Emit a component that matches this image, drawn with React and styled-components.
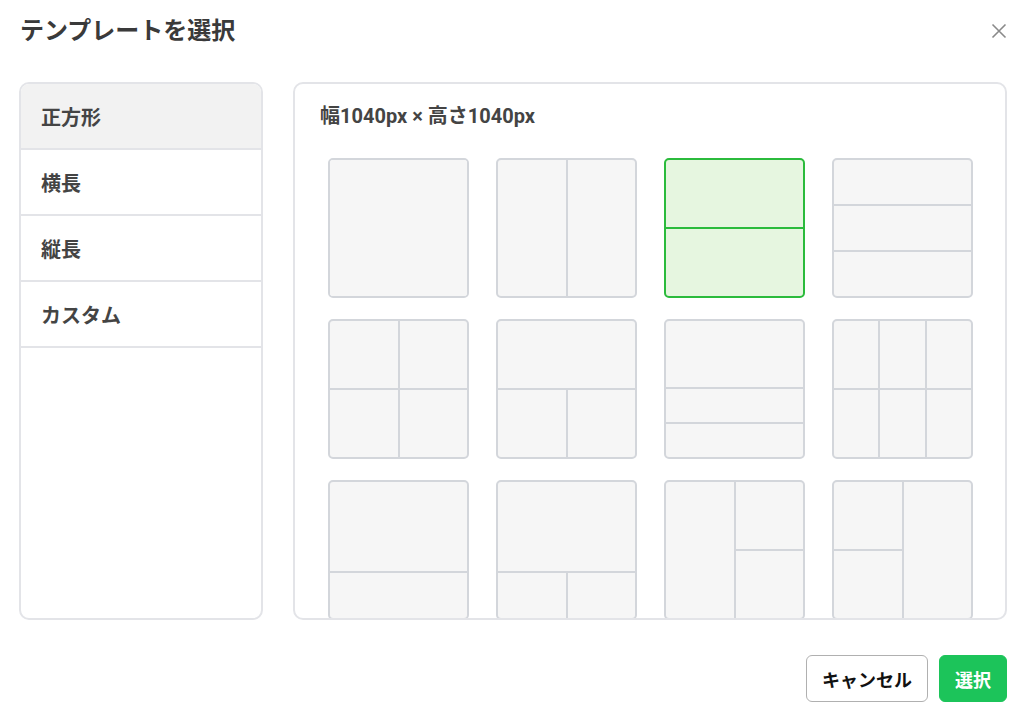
import React, { useState } from "react";
import styled, { createGlobalStyle } from "styled-components";

const GlobalStyle = createGlobalStyle`
  body {
    margin: 0;
    background: #fff;
    font-family: Roboto, "Noto Sans CJK JP", sans-serif;
  }
`;

const Modal = styled.div`
  width: 1024px;
  height: 715px;
  box-sizing: border-box;
  padding: 0 17px 0 19px;
  display: flex;
  flex-direction: column;
  background: #fff;
`;

const Header = styled.div`
  height: 82px;
  flex-shrink: 0;
  display: flex;
  justify-content: space-between;
  align-items: flex-start;
  padding-top: 14px;
  box-sizing: border-box;
`;

const Title = styled.h1`
  margin: 0 0 0 1px;
  font-size: 24px;
  line-height: 34px;
  font-weight: 700;
  color: #3a3a3a;
`;

const CloseButton = styled.button`
  border: none;
  background: none;
  padding: 0;
  margin: 5px -4px 0 0;
  width: 24px;
  height: 24px;
  display: flex;
  align-items: center;
  justify-content: center;
  cursor: pointer;
`;

const Body = styled.div`
  height: 538px;
  flex-shrink: 0;
  display: grid;
  grid-template-columns: 244px 1fr;
  gap: 30px;
`;

const SidePanel = styled.div`
  border: 2px solid #e3e4e8;
  border-radius: 10px;
  overflow: hidden;
`;

const SideItem = styled.div`
  height: 64px;
  border-bottom: 2px solid #e3e4e8;
  display: flex;
  align-items: center;
  padding-left: 20px;
  font-size: 20px;
  font-weight: 700;
  color: #444;
  background: ${props => props.active ? "#f2f2f2" : "#fff"};
  cursor: pointer;
`;

const MainPanel = styled.div`
  border: 2px solid #e3e4e8;
  border-radius: 10px;
  overflow: hidden;
  padding: 19px 0 0 33px;
  display: flex;
  flex-direction: column;
`;

const SizeLabel = styled.div`
  font-size: 20px;
  line-height: 26px;
  font-weight: 700;
  color: #444;
  margin-left: -8px;
`;

const TileGrid = styled.div`
  margin-top: 29px;
  display: grid;
  grid-template-columns: repeat(4, 141px);
  grid-auto-rows: 140px;
  column-gap: 27px;
  row-gap: 21px;
`;

const Tile = styled.div`
  box-sizing: border-box;
  border: 2px solid ${props => props.selected ? "#2bbb3c" : "#d3d6db"};
  background: ${props => props.selected ? "#2bbb3c" : "#d3d6db"};
  border-radius: 5px;
  overflow: hidden;
  display: grid;
  gap: 2px;
  grid-template-columns: ${props => props.cols};
  grid-template-rows: ${props => props.rows};
  grid-template-areas: ${props => props.areas};
  cursor: pointer;
`;

const Cell = styled.div`
  grid-area: ${props => props.area};
  background: ${props => props.selected ? "#e6f6e0" : "#f6f6f6"};
`;

const Footer = styled.div`
  flex: 1;
  display: flex;
  justify-content: flex-end;
  align-items: flex-start;
  padding-top: 35px;
  gap: 11px;
`;

const Button = styled.button`
  height: 47px;
  box-sizing: border-box;
  padding: 0 15px;
  border-radius: 6px;
  border: 1px solid ${props => props.primary ? "#1cc45a" : "#b0b0b0"};
  background: ${props => props.primary ? "#1cc45a" : "#fff"};
  color: ${props => props.primary ? "#fff" : "#111"};
  font-family: Roboto, "Noto Sans CJK JP", sans-serif;
  font-size: 18px;
  font-weight: 700;
  cursor: pointer;
`;

const categories = ["正方形", "横長", "縦長", "カスタム"];

const layouts = [
  { cols: "1fr", rows: "1fr", areas: `"a"` },
  { cols: "1fr 1fr", rows: "1fr", areas: `"a b"` },
  { cols: "1fr", rows: "1fr 1fr", areas: `"a" "b"` },
  { cols: "1fr", rows: "1fr 1fr 1fr", areas: `"a" "b" "c"` },
  { cols: "1fr 1fr", rows: "1fr 1fr", areas: `"a b" "c d"` },
  { cols: "1fr 1fr", rows: "1fr 1fr", areas: `"a a" "b c"` },
  { cols: "1fr", rows: "2fr 1fr 1fr", areas: `"a" "b" "c"` },
  { cols: "1fr 1fr 1fr", rows: "1fr 1fr", areas: `"a b c" "d e f"` },
  { cols: "1fr", rows: "2fr 1fr", areas: `"a" "b"` },
  { cols: "1fr 1fr", rows: "2fr 1fr", areas: `"a a" "b c"` },
  { cols: "1fr 1fr", rows: "1fr 1fr", areas: `"a b" "a c"` },
  { cols: "1fr 1fr", rows: "1fr 1fr", areas: `"a c" "b c"` },
];

const areaNames = (areas) => [...new Set(areas.replace(/"/g, "").split(/\s+/).filter(Boolean))];

const App = () => {
  const [category, setCategory] = useState(0);
  const [selected, setSelected] = useState(2);

  return (
    <Modal>
      <GlobalStyle />
      <Header>
        <Title>テンプレートを選択</Title>
        <CloseButton aria-label="閉じる">
          <svg width="16" height="16" viewBox="0 0 16 16">
            <path d="M1.5 1.5L14.5 14.5M14.5 1.5L1.5 14.5" stroke="#8a8a8a" strokeWidth="1.6" fill="none" />
          </svg>
        </CloseButton>
      </Header>
      <Body>
        <SidePanel>
          {categories.map((name, i) => (
            <SideItem key={name} active={i === category} onClick={() => setCategory(i)}>
              {name}
            </SideItem>
          ))}
        </SidePanel>
        <MainPanel>
          <SizeLabel>幅1040px × 高さ1040px</SizeLabel>
          <TileGrid>
            {layouts.map((layout, i) => (
              <Tile
                key={i}
                selected={i === selected}
                cols={layout.cols}
                rows={layout.rows}
                areas={layout.areas}
                onClick={() => setSelected(i)}
              >
                {areaNames(layout.areas).map((area) => (
                  <Cell key={area} area={area} selected={i === selected} />
                ))}
              </Tile>
            ))}
          </TileGrid>
        </MainPanel>
      </Body>
      <Footer>
        <Button>キャンセル</Button>
        <Button primary>選択</Button>
      </Footer>
    </Modal>
  );
};

export default App;
